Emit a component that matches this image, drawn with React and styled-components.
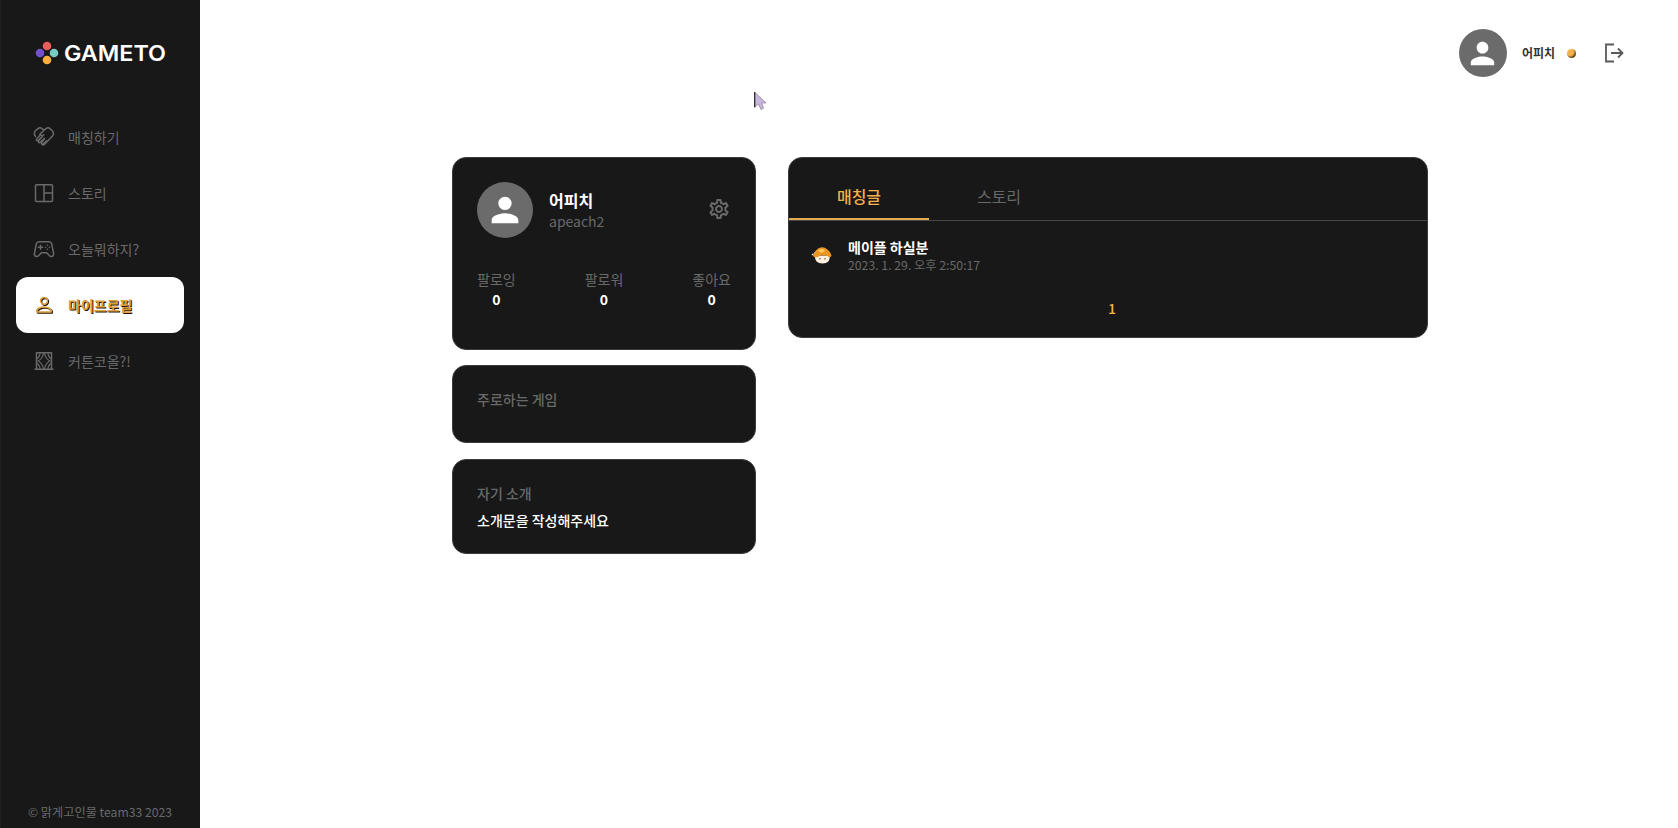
import React from "react";
import styled, { createGlobalStyle, css } from "styled-components";
import { MdPerson, MdOutlineSettings } from "react-icons/md";

const colors = {
  panel: "#181818",
  line: "#3c3c3c",
  gray: "#696969",
  avatar: "#6b6b6b",
  gold: "#f5b14c",
};

const GlobalStyle = createGlobalStyle`
  *, *::before, *::after { box-sizing: border-box; }
  body {
    margin: 0;
    background: #fff;
    font-family: "Noto Sans CJK KR", "Noto Sans", sans-serif;
    font-size: 14px;
    line-height: 20px;
    overflow: hidden;
  }
  button { font: inherit; background: none; border: 0; padding: 0; }
  svg { display: block; flex: none; }
`;

const Page = styled.div`
  display: flex;
  height: 828px;
`;

const Sidebar = styled.aside`
  display: flex;
  flex-direction: column;
  width: 200px;
  flex: none;
  padding: 41px 16px 5px;
  background: ${colors.panel};
  box-shadow: inset 1px 0 #202020;
`;

const Logo = styled.div`
  display: flex;
  align-items: center;
  gap: 5px;
  height: 24px;
  padding-left: 19px;
`;

const Nav = styled.nav`
  display: flex;
  flex-direction: column;
  margin-top: 44px;
  flex: 1;
`;

const NavItem = styled.a`
  display: flex;
  align-items: center;
  gap: 12px;
  height: 56px;
  padding-left: 16px;
  border-radius: 12px;
  color: ${colors.gray};
  ${(p) =>
    p.$active &&
    css`
      background: #fff;
      color: #dda03e;
      font-weight: 700;
      text-shadow: 1px 1px 0 #241000;
      svg { filter: drop-shadow(1px 1px 0 #241000); }
    `}
`;

const Copyright = styled.footer`
  color: ${colors.gray};
  font-size: 12.2px;
  line-height: 22px;
  text-align: center;
  white-space: nowrap;
`;

const Main = styled.main`
  flex: 1;
  min-width: 0;
`;

const Header = styled.header`
  display: flex;
  align-items: center;
  justify-content: flex-end;
  height: 106px;
  padding-right: 54px;
`;

const Avatar = styled.div`
  display: grid;
  place-items: center;
  flex: none;
  width: ${(p) => p.$size}px;
  height: ${(p) => p.$size}px;
  border-radius: 50%;
  background: ${colors.avatar};
  color: #fff;
`;

const UserName = styled.span`
  margin-left: 15px;
  font-size: 12px;
  font-weight: 700;
  color: #333;
`;

const StatusDot = styled.span`
  width: 9px;
  height: 9px;
  margin: 1px 28px 0 12px;
  border-radius: 50%;
  background: radial-gradient(circle at 35% 35%, #f5b14c 40%, #2b1600 80%);
`;

const Content = styled.div`
  display: flex;
  align-items: flex-start;
  gap: 32px;
  padding: 51px 0 0 252px;
`;

const Column = styled.div`
  display: flex;
  flex-direction: column;
  gap: 15.500px;
  width: 304px;
`;

const Card = styled.section`
  height: ${(p) => p.$height}px;
  padding: ${(p) => p.$top ?? 24}px 24px 0;
  border: 1px solid ${colors.line};
  border-radius: 14px;
  background: ${colors.panel};
  color: #fff;
`;

const Profile = styled.div`
  display: flex;
  align-items: center;
  gap: 16px;
`;

const Identity = styled.div`
  flex: 1;
  color: ${colors.gray};
  strong {
    display: block;
    color: #fff;
    font-size: 16px;
    line-height: 22px;
  }
  span {
    display: block;
    line-height: 21px;
  }
`;

const SettingsButton = styled.button`
  color: ${colors.gray};
  margin: 0 0 3px;
`;

const Stats = styled.div`
  display: flex;
  justify-content: space-between;
  margin-top: 31px;
`;

const Stat = styled.div`
  text-align: center;
  color: ${colors.gray};
  strong {
    display: block;
    color: #fff;
  }
`;

const Label = styled.h2`
  margin: 0;
  font-size: 14px;
  font-weight: 500;
  line-height: 20px;
  color: ${colors.gray};
`;

const Intro = styled.p`
  margin: 7px 0 0;
  font-weight: 500;
`;

const Board = styled(Card)`
  width: 640px;
  padding: 0;
`;

const Tabs = styled.div`
  display: flex;
  height: 63px;
  border-bottom: 1px solid #484848;
`;

const Tab = styled.button`
  width: 140px;
  height: 62px;
  padding-top: 16px;
  font-size: 16px;
  color: ${(p) => (p.$active ? colors.gold : colors.gray)};
  font-weight: ${(p) => (p.$active ? 500 : 400)};
  border-bottom: 2px solid ${(p) => (p.$active ? "#e5aa4d" : "transparent")};
`;

const Post = styled.article`
  display: flex;
  align-items: center;
  gap: 15px;
  padding: 17px 23px 0 22px;
`;

const PostText = styled.div`
  line-height: 18px;
  strong {
    display: block;
    font-weight: 700;
  }
  time {
    display: block;
    font-size: 12.25px;
    color: ${colors.gray};
  }
`;

const Pagination = styled.div`
  margin-top: 24px;
  padding-left: 8px;
  text-align: center;
  font-weight: 500;
  color: ${colors.gold};
`;

const Pointer = styled.svg`
  position: absolute;
  left: 754px;
  top: 91px;
`;

function LineIcon({ children }) {
  return (
    <svg
      width="24"
      height="24"
      viewBox="0 0 24 24"
      fill="none"
      stroke="currentColor"
      strokeWidth="1.5"
      strokeLinejoin="round"
      strokeLinecap="round"
    >
      {children}
    </svg>
  );
}

const HandshakeIcon = () => (
  <LineIcon>
    <path d="M3.500 11.500C2 9.500 2 7.500 3.500 5.800L6 3.600c1.200-1 2.800-1 4 0l2 1.700 2-1.700c1.200-1 2.800-1 4 0l2.300 2.200c1.500 1.700 1.500 3.800 0 5.400l-8 8.300c-.7.700-1.700.6-2.200-.1" />
    <path d="M12 5.300 7.800 9.400c1 1.400 2.800 1.500 4 .4" />
    <path d="m8 10.500-3.200 3.300c-1.200 1.200.5 2.600 1.500 1.500l4-3.800M10.300 11.500l-3.700 4.300c-.9 1.200.7 2.500 1.700 1.500l4.200-4M12.500 13.500l-2.800 4.200c-.8.900.4 2.200 1.400 1.500l3.400-3.500" />
  </LineIcon>
);

const StoryIcon = () => (
  <LineIcon>
    <rect x="3.500" y="3.700" width="17" height="16.800" rx="1" />
    <path d="M12 4v16.500M12 12h8.500" />
  </LineIcon>
);

const GamepadIcon = () => (
  <LineIcon>
    <path d="M6.800 4.700h10.400c1.200 0 2.100.8 2.400 2l2 9.800c.4 2.700-2.500 4-4.100 2.200l-2.800-3H9.300l-2.800 3c-1.600 1.800-4.500.5-4.100-2.200l2-9.800c.3-1.200 1.200-2 2.400-2z" />
    <path d="M8.500 8.200v4M6.500 10.200h4" />
    <path d="M15.500 8.200h.01M15.500 12.200h.01M13.600 10.200h.01M17.400 10.200h.01" strokeWidth="1.6" />
  </LineIcon>
);

const PersonIcon = () => (
  <LineIcon>
    <circle cx="12" cy="7.800" r="3.400" />
    <path d="M4.800 19v-1.500c0-2 4.200-3.500 7.200-3.500s7.200 1.500 7.200 3.500V19z" />
  </LineIcon>
);

const CurtainIcon = () => (
  <LineIcon>
    <path d="M4.500 20V3.700h15V20M3 20.300h18" />
    <path d="M11.500 4c-.5 4-2.500 6.500-5.500 8 3 1.500 5 4 5.500 8M12.500 4c.5 4 2.500 6.500 5.500 8-3 1.500-5 4-5.500 8M8 4c0 2.500-1.200 4.500-3.500 6M16 4c0 2.500 1.200 4.500 3.500 6M8 20c0-2.500-1.200-4.500-3.500-6M16 20c0-2.500 1.200-4.500 3.500-6" strokeWidth="1.200" />
  </LineIcon>
);

const navItems = [
  { label: "매칭하기", icon: HandshakeIcon },
  { label: "스토리", icon: StoryIcon },
  { label: "오늘뭐하지?", icon: GamepadIcon },
  { label: "마이프로필", icon: PersonIcon, active: true },
  { label: "커튼코올?!", icon: CurtainIcon },
];

function LogoMark() {
  return (
    <svg width="24" height="24" viewBox="0 0 24 24">
      <circle cx="12" cy="5" r="4.300" fill="#ee5b5b" />
      <circle cx="5" cy="12" r="4.300" fill="#7450cf" />
      <circle cx="19" cy="12" r="4.300" fill="#78cbc2" />
      <circle cx="12" cy="19" r="4.300" fill="#ffb13b" />
    </svg>
  );
}

function Wordmark() {
  return (
    <svg width="104" height="24" viewBox="0 0 104 24">
      <text
        x="0"
        y="20"
        fill="#fff"
        fontFamily="Inter, sans-serif"
        fontWeight="600"
        fontSize="22"
        textLength="102"
        lengthAdjust="spacingAndGlyphs"
      >
        GAMETO
      </text>
    </svg>
  );
}

function Mushroom() {
  return (
    <svg width="22" height="20" viewBox="0 0 22 20">
      <path d="M1 9 9 2.500" stroke="#eee" strokeWidth="1.200" strokeDasharray="2 1" />
      <path d="M4 9.500c-.5 5 2.400 8 7.500 8s8-3 7-8z" fill="#fff0df" />
      <path d="M2 9.500C4 4.500 7 1.500 11 1.200c4.500.3 8.500 4.300 9.500 8.300-.5 2-2.500 2-4 .8-3-1.300-6-1.300-9 .2C5.500 12 2.500 11.500 2 9.500z" fill="#e99620" />
      <path d="M7 5c2-2.500 5-2.500 7-.5l-3 2.500z" fill="#ffc45a" />
      <path d="M9 12v1.500M14 12v1.500" stroke="#5a3820" />
    </svg>
  );
}

function ExitIcon() {
  return (
    <svg width="20" height="20" viewBox="0 0 20 20" fill="none" stroke="#595959" strokeWidth="1.800">
      <path d="M10 1.500H2v17h8M7 10h11.500M14 5.500l4.500 4.500-4.500 4.500" />
    </svg>
  );
}

export default function App() {
  return (
    <>
      <GlobalStyle />
      <Page>
        <Sidebar>
          <Logo>
            <LogoMark />
            <Wordmark />
          </Logo>
          <Nav>
            {navItems.map(({ label, icon: Icon, active }) => (
              <NavItem key={label} $active={active}>
                <Icon />
                {label}
              </NavItem>
            ))}
          </Nav>
          <Copyright>© 맑게고인물 team33 2023</Copyright>
        </Sidebar>
        <Main>
          <Header>
            <Avatar $size={48}><MdPerson size={35} /></Avatar>
            <UserName>어피치</UserName>
            <StatusDot />
            <ExitIcon />
          </Header>
          <Content>
            <Column>
              <Card $height={192.5}>
                <Profile>
                  <Avatar $size={56}><MdPerson size={40} /></Avatar>
                  <Identity>
                    <strong>어피치</strong>
                    <span>apeach2</span>
                  </Identity>
                  <SettingsButton><MdOutlineSettings size={24} /></SettingsButton>
                </Profile>
                <Stats>
                  {["팔로잉", "팔로워", "좋아요"].map((name) => (
                    <Stat key={name}>{name}<strong>0</strong></Stat>
                  ))}
                </Stats>
              </Card>
              <Card $height={78} $top={23}>
                <Label>주로하는 게임</Label>
              </Card>
              <Card $height={95} $top={23}>
                <Label>자기 소개</Label>
                <Intro>소개문을 작성해주세요</Intro>
              </Card>
            </Column>
            <Board $height={181}>
              <Tabs>
                <Tab $active>매칭글</Tab>
                <Tab>스토리</Tab>
              </Tabs>
              <Post>
                <Mushroom />
                <PostText>
                  <strong>메이플 하실분</strong>
                  <time>2023. 1. 29. 오후 2:50:17</time>
                </PostText>
              </Post>
              <Pagination>1</Pagination>
            </Board>
          </Content>
        </Main>
      </Page>
      <Pointer width="14" height="20" viewBox="0 0 14 20">
        <path d="M.5 1v15.500l4-3.500 2.500 5.500 2.500-1.200L7.500 12H12z" fill="#c9b6dc" stroke="#897d98" strokeWidth=".7" />
        <path d="M.7 1v15" stroke="#222" strokeWidth="1.200" />
      </Pointer>
    </>
  );
}
